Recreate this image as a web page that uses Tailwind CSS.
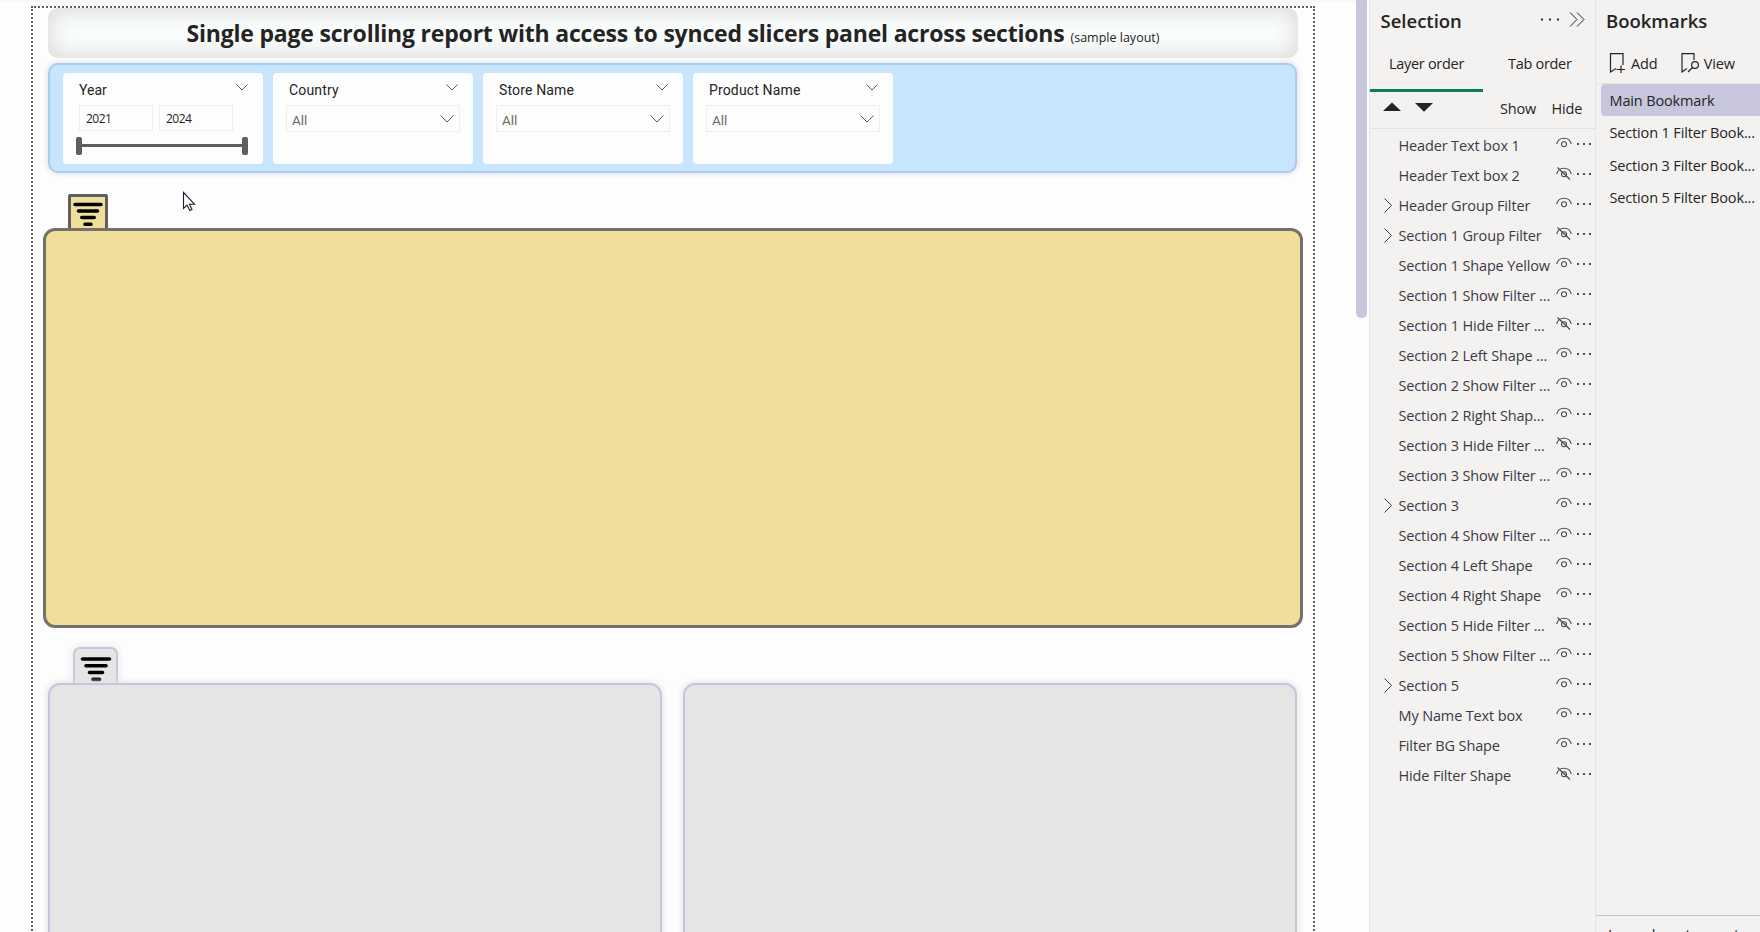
<!DOCTYPE html>
<html lang="en">
<head>
<meta charset="utf-8">
<title>Scrolling report</title>
<script src="https://cdn.jsdelivr.net/npm/@tailwindcss/browser@4"></script>
</head>
<body class="relative flex h-[932px] w-[1760px] overflow-hidden bg-[#f3f2f1] font-['Open_Sans','Noto_Sans',sans-serif] text-[#252423]">

<main class="flex h-[932px] w-[1369px] shrink-0 justify-between overflow-hidden bg-[linear-gradient(#f3f9f9_2px,#fdfdfd_2px)]">
  <div class="mt-[6px] ml-[31px] h-[1200px] w-[1284px] shrink-0 border-2 border-dotted border-[#605e5c]">
    <header class="ml-[15px] flex h-[50px] w-[1250px] items-baseline justify-center rounded-[10px] bg-[#fafdfd] pt-[9px] shadow-[inset_0_0_20px_4px_#dddcd9] whitespace-nowrap">
      <h1 class="text-[23px] leading-[33px] font-bold tracking-[-0.2px]">Single page scrolling report with access to synced slicers panel across sections</h1>
      <span class="ml-[6px] text-[12.500px]">(sample layout)</span>
    </header>

    <section class="mt-[5px] ml-[15px] flex h-[110px] w-[1249px] gap-[10px] rounded-[10px] border-2 border-[#a9cdea] bg-[#c8e5fe] pt-[8px] pl-[13px] shadow-[0_0_5px_1px_#e0def0]" id="slicers">
      <div class="h-[91px] w-[200px] rounded bg-[#fdfdfd] px-4 pt-[9px]">
        <div class="flex items-start justify-between font-[Roboto,sans-serif] text-[14px] leading-4"><span>Year</span>
          <svg class="mt-[2px] -mr-[0.500px] h-[7px] w-3" viewBox="0 0 12 7" fill="none" stroke="#605e5c"><path d="M.5.5 6 6 11.500.5"/></svg></div>
        <div class="mt-[7px] flex gap-[6px] text-[12px] leading-[25px] tracking-[-0.5px]">
          <div class="h-[26px] w-[74px] border border-[#eeeeee] pl-[6px]"><span>2021</span></div>
          <div class="h-[26px] w-[74px] border border-[#eeeeee] pl-[6px]"><span>2024</span></div>
        </div>
        <div class="mt-[5.500px] -mr-[1px] -ml-[3px] flex h-[18px] w-[172px] items-center">
          <div class="h-[18px] w-[6px] rounded-[2px] bg-[#605e5c]"></div>
          <div class="h-[3px] flex-1 bg-[#605e5c]"></div>
          <div class="h-[18px] w-[6px] rounded-[2px] bg-[#605e5c]"></div>
        </div>
      </div>
    </section>

    <div class="mt-[21px] ml-[35px] flex h-[35px] w-10 justify-center rounded-t-[3px] border-3 border-b-0 border-[#605e5c] bg-[#efdf9a]">
      <svg class="mt-[4px] h-[26px] w-8 shrink-0" viewBox="0 0 32 26" stroke="#000" stroke-width="3.600" stroke-linecap="round"><path d="M3 3.500H29M6.500 10H25.500M9.800 16.500H22.200M13 23.200H19"/></svg>
    </div>
    <div class="relative -mt-px ml-[10px] h-[400px] w-[1260px] rounded-[12px] border-3 border-[#75716b] bg-[#efdf9a]"></div>

    <div class="mt-[19px] ml-[40px] flex h-[36px] w-[45px] justify-center rounded-t-[7px] border-2 border-b-0 border-[#c8c6dc] bg-[#e4e6e5] shadow-[0_0_6px_2px_#f0ecea]">
      <svg class="mt-[6px] h-[27px] w-8 shrink-0" viewBox="0 0 32 27" stroke="#000" stroke-width="3.600" stroke-linecap="round"><path d="M2.500 4H29.500M6 10.800H26M9.500 17.500H22.500M13 24.400H19.500"/></svg>
    </div>
    <div class="flex gap-[21px] pl-[15px]">
      <div class="relative h-[400px] w-[614px] rounded-[12px] border-2 border-[#c8c6dc] bg-[#e4e6e5] shadow-[0_0_6px_1px_#e6e3e1]"></div>
      <div class="relative h-[400px] w-[614px] rounded-[12px] border-2 border-[#c8c6dc] bg-[#e4e6e5] shadow-[0_0_6px_1px_#e6e3e1]"></div>
    </div>
  </div>
  <div class="mr-[2px] h-[318px] w-[11px] rounded-b-[5px] bg-[#c8c6dc]"></div>
</main>

<aside class="flex h-full w-[227px] shrink-0 flex-col border-x border-[#e4e5e6]">
  <div class="flex h-10 items-start pl-[10.500px]">
    <h2 class="w-[160px] pt-[7px] text-[18.500px] leading-[27px] font-semibold">Selection</h2>
    <svg class="mt-[18px] h-[3px] w-[18px]" viewBox="0 0 18 3" fill="#252423"><path d="M0 .5h2v2H0zM8 .5h2v2H8zM16 .5h2v2h-2z"/></svg>
    <svg class="mt-3 ml-[10px] h-[15px] w-4" viewBox="0 0 16 15" fill="none" stroke="#252423"><path d="M1 .5 8 7.500 1 14.500M8 .5 15 7.500 8 14.500"/></svg>
  </div>
  <div class="flex h-[52px] pt-[12px] text-[14.500px] leading-[24px] tracking-[-0.3px]">
    <div class="h-10 w-[113px] border-b-3 border-[#117865] pl-[19px]">Layer order</div>
    <div class="pl-[25px]">Tab order</div>
  </div>
  <div class="flex h-[37px] items-start border-b border-[#dfe3e3] pt-[5px] pl-[13px] text-[14.500px] leading-6 tracking-[-0.2px]">
    <svg class="mt-[5px] h-[10px] w-[50px]" viewBox="0 0 50 10" fill="#252423"><path d="M0 9 9 .5 18 9zM32 1H50L41 9.800z"/></svg>
    <span class="ml-[67px]">Show</span><span class="ml-[15.500px]">Hide</span>
  </div>
  <ul id="layers" class="pt-[1px] text-[14.500px] tracking-[-0.14px] text-[#3b3a45]"></ul>
</aside>

<aside class="flex h-full w-[164px] shrink-0 flex-col overflow-hidden">
  <h2 class="h-10 pt-[7px] pl-[10px] text-[18.500px] leading-[27px] font-semibold">Bookmarks</h2>
  <div class="flex h-[44px] items-start border-b border-[#dfe3e3] pt-[12px] pl-[13px] text-[14.500px] leading-6 tracking-[-0.1px]">
    <svg class="mt-[1px] h-5 w-4 shrink-0" viewBox="0 0 16 20" fill="none" stroke="#252423" stroke-width="1.200"><path d="M14 12V.6H1.500V19L7 15.500M7.500 16.500H16M12 12.500V20"/></svg>
    <span class="ml-[6px]">Add</span>
    <svg class="mt-[1px] ml-[23px] h-5 w-[18px] shrink-0" viewBox="0 0 18 20" fill="none" stroke="#252423" stroke-width="1.200"><path d="M13 7V.6H1V19L6 15.500"/><circle cx="14" cy="12" r="3.400"/><path d="M11.500 14.500 7 19"/></svg>
    <span class="ml-[5px]">View</span>
  </div>
  <ul class="text-[14.500px] leading-[34px] tracking-[-0.15px] whitespace-nowrap">
    <li class="ml-[5px] h-8 rounded-l bg-[#c8c6dc] pl-[8.500px]">Main Bookmark</li>
    <li class="ml-[5px] h-8 pl-[8.500px]">Section 1 Filter Book...</li>
    <li class="mt-px ml-[5px] h-8 pl-[8.500px]">Section 3 Filter Book...</li>
    <li class="ml-[5px] h-8 pl-[8.500px]">Section 5 Filter Book...</li>
  </ul>
  <div class="mt-auto h-[17px] shrink-0 border-t border-[#c4c3cf] pt-[8px] pl-[12px] text-[15px] leading-5 whitespace-nowrap">Learn how to create an</div>
</aside>

<svg class="absolute top-[191px] left-[182px] h-[21px] w-[14px]" viewBox="0 0 14 21" fill="#fff" stroke="#1b1b2b" stroke-width="1.100"><path d="M1.500 1.500V17.500L5 14.200 7.800 19.500 10 18.400 7.500 13.200H12.500z"/></svg>

<script>
for (const n of ['Country', 'Store Name', 'Product Name']) {
  document.getElementById('slicers').insertAdjacentHTML('beforeend', `
  <div class="h-[91px] w-[200px] rounded bg-[#fdfdfd] pt-[9px]">
    <div class="flex items-start justify-between px-4 font-[Roboto,sans-serif] text-[14px] leading-4 tracking-[0.150px]"><span>${n}</span>
      <svg class="mt-[2px] -mr-[0.500px] h-[7px] w-3" viewBox="0 0 12 7" fill="none" stroke="#605e5c"><path d="M.5.5 6 6 11.500.5"/></svg></div>
    <div class="mt-[7px] ml-[13px] flex h-[27px] w-[174px] items-center justify-between border border-[#eeeeee] pr-[5px] pl-[5px] font-[Roboto,sans-serif] text-[13.500px] text-[#6b6966]"><span class="pt-[4px]">All</span>
      <svg class="h-2 w-[14px]" viewBox="0 0 14 8" fill="none" stroke="#605e5c"><path d="M.5.5 7 7 13.500.5"/></svg></div>
  </div>`);
}
const rows = [['Header Text box 1',1],['Header Text box 2',0],['Header Group Filter',1,1],['Section 1 Group Filter',0,1],['Section 1 Shape Yellow',1],['Section 1 Show Filter ...',1],['Section 1 Hide Filter ...',0],['Section 2 Left Shape ...',1],['Section 2 Show Filter ...',1],['Section 2 Right Shap...',1],['Section 3 Hide Filter ...',0],['Section 3 Show Filter ...',1],['Section 3',1,1],['Section 4 Show Filter ...',1],['Section 4 Left Shape',1],['Section 4 Right Shape',1],['Section 5 Hide Filter ...',0],['Section 5 Show Filter ...',1],['Section 5',1,1],['My Name Text box',1],['Filter BG Shape',1],['Hide Filter Shape',0]];
document.getElementById('layers').innerHTML = rows.map(([t, vis, grp]) => `
  <li class="flex h-[30px] items-center whitespace-nowrap">
    <svg class="ml-[14px] h-[15px] w-2 shrink-0" viewBox="0 0 8 15" fill="none" stroke="#3b3a45">${grp ? '<path d="M.5.5 7.500 7.500.5 14.500"/>' : ''}</svg>
    <div class="ml-[6.500px] w-[157px] shrink-0 pt-[2px]">${t}</div>
    <svg class="mb-[3px] h-[13px] w-4 shrink-0" viewBox="0 0 16 13" fill="none" stroke="#4a4957" stroke-width="1.100"><path d="M.7 7C1.600 3.300 4.500 1.300 8 1.300S14.400 3.300 15.300 7"/><circle cx="8" cy="7.300" r="2.500"/>${vis ? '' : '<path d="M1.500.5 14 12.500" stroke-width="1.200"/>'}</svg>
    <svg class="mb-[2px] ml-[5.500px] h-[2px] w-[14px] shrink-0" viewBox="0 0 14 2" fill="#3b3a45"><path d="M.1.1h1.800v1.800H.1zM6.100.1h1.800v1.800H6.100zM12.100.1h1.800v1.800h-1.800z"/></svg>
  </li>`).join('');
</script>
</body>
</html>
